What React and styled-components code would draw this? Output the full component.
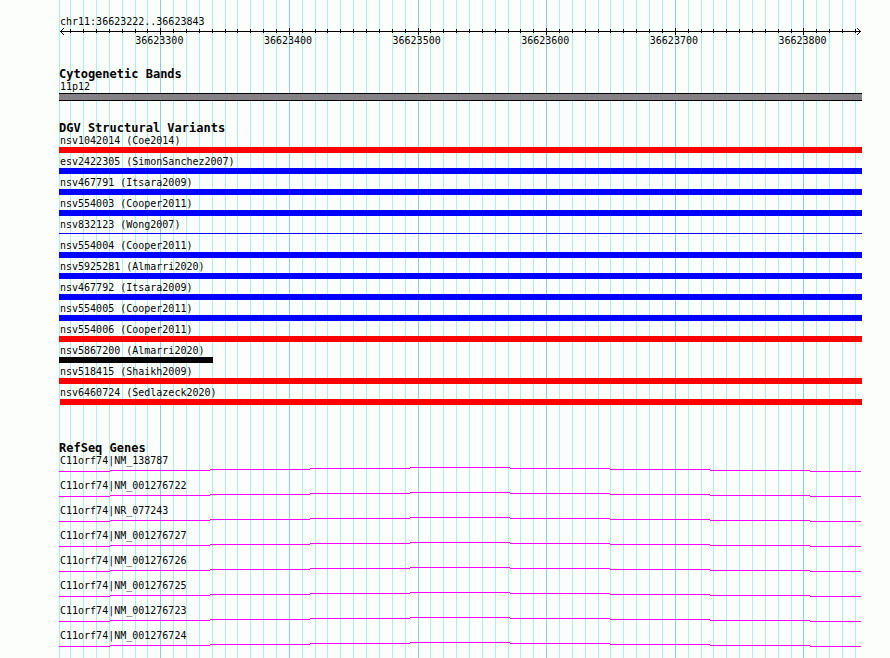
import React from 'react';
import styled, { createGlobalStyle } from 'styled-components';

const GlobalStyle = createGlobalStyle`
  body {
    margin: 0;
    background: #fcfefc;
    color: #000;
    font-family: 'DejaVu Sans Mono', monospace;
    font-size: 10px;
    line-height: 12px;
  }
`;

// visible region of the chromosome, in bases
const START = 36623221.3;
const SPAN = 624.2;
const FIRST_TICK = 36623230;
const LAST_TICK = 36623840;

const percent = base => `${((base - START) / SPAN) * 100}%`;

const ticks = [];
for (let base = FIRST_TICK; base <= LAST_TICK; base += 10) {
  ticks.push({ base, major: base % 100 === 0 });
}

const variants = [
  { name: 'nsv1042014 (Coe2014)', color: '#ff0000' },
  { name: 'esv2422305 (SimonSanchez2007)', color: '#0000ff' },
  { name: 'nsv467791 (Itsara2009)', color: '#0000ff' },
  { name: 'nsv554003 (Cooper2011)', color: '#0000ff' },
  { name: 'nsv832123 (Wong2007)', color: '#0000ff', thin: true },
  { name: 'nsv554004 (Cooper2011)', color: '#0000ff' },
  { name: 'nsv5925281 (Almarri2020)', color: '#0000ff' },
  { name: 'nsv467792 (Itsara2009)', color: '#0000ff' },
  { name: 'nsv554005 (Cooper2011)', color: '#0000ff' },
  { name: 'nsv554006 (Cooper2011)', color: '#ff0000' },
  { name: 'nsv5867200 (Almarri2020)', color: '#000000', end: 36623341 },
  { name: 'nsv518415 (Shaikh2009)', color: '#ff0000' },
  { name: 'nsv6460724 (Sedlazeck2020)', color: '#ff0000', start: 36623222 },
];

const genes = [
  'C11orf74|NM_138787',
  'C11orf74|NM_001276722',
  'C11orf74|NR_077243',
  'C11orf74|NM_001276727',
  'C11orf74|NM_001276726',
  'C11orf74|NM_001276725',
  'C11orf74|NM_001276723',
  'C11orf74|NM_001276724',
];

const Page = styled.main`
  box-sizing: border-box;
  min-height: 100vh;
  padding: 0 28px 0 59px;
  display: flex;
`;

const Browser = styled.div`
  position: relative;
  flex: 1;
  min-width: 0;
  padding: 16px 0 8px;
`;

// grid lines run behind every track
const GridLine = styled.div`
  position: absolute;
  top: 0;
  bottom: 0;
  width: 1px;
  background: ${props => (props.$major ? '#87ceeb' : '#afeeee')};
`;

const Content = styled.div`
  position: relative;
  display: flex;
  flex-direction: column;
`;

const Label = styled.div`
  height: 12px;
  padding-left: 1px;
  white-space: pre;
`;

const Axis = styled.div`
  position: relative;
  height: 19px;
  margin-bottom: 21px;
`;

const AxisLine = styled.div`
  position: absolute;
  top: 3px;
  left: 1px;
  right: 1px;
  height: 1px;
  background: #000;
`;

const ArrowHead = styled.svg`
  position: absolute;
  top: 0;
  ${props => (props.$right ? 'right: 1px;' : 'left: 1px;')}
  width: 4px;
  height: 7px;
`;

const Tick = styled.div`
  position: absolute;
  top: ${props => (props.$major ? '0' : '1px')};
  width: 1px;
  height: ${props => (props.$major ? '7px' : '4px')};
  background: #000;
`;

const TickLabel = styled.div`
  position: absolute;
  top: 7px;
  width: 48px;
  margin-left: -25px;
  white-space: nowrap;
`;

const Track = styled.section`
  margin-bottom: ${props => props.$space || 0}px;
`;

const TrackTitle = styled.h2`
  margin: 0;
  height: 13px;
  font-size: 12px;
  line-height: 13px;
  font-weight: bold;
  white-space: nowrap;
`;

const Rows = styled.div`
  display: flex;
  flex-direction: column;
  gap: ${props => props.$gap}px;
`;

const Band = styled.div`
  box-sizing: border-box;
  height: 8px;
  background: #848284;
  border: solid #000;
  border-width: 1px 0;
`;

const BarSlot = styled.div`
  box-sizing: border-box;
  height: 6px;
  padding-top: ${props => (props.$thin ? 2 : 0)}px;
`;

const Bar = styled.div`
  height: ${props => (props.$thin ? 1 : 6)}px;
  background: ${props => props.$color};
`;

const Intron = styled.svg`
  display: block;
  width: 100%;
  height: 5px;
`;

const Arrow = ({ right }) => (
  <ArrowHead $right={right} viewBox="0 0 4 7" shapeRendering="crispEdges">
    <path
      transform={right ? 'translate(4 0) scale(-1 1)' : undefined}
      d="M0 3h1v1H0zM1 2h1v1H1zM1 4h1v1H1zM2 1h1v1H2zM2 5h1v1H2zM3 0h1v1H3zM3 6h1v1H3z"
    />
  </ArrowHead>
);

// shallow stepped arch that spans the whole region
const IntronLine = () => (
  <Intron viewBox="0 0 803 5" preserveAspectRatio="none" shapeRendering="crispEdges">
    <path
      fill="#ff00ff"
      d="M0 4h51v1H0zM51 3h100v1H51zM151 2h100v1H151zM251 1h100v1H251zM351 0h100v1H351zM451 1h100v1H451zM551 2h100v1H551zM651 3h100v1H651zM751 4h51v1H751z"
    />
  </Intron>
);

const VariantRow = ({ name, color, thin, start, end }) => (
  <div>
    <Label>{name}</Label>
    <BarSlot $thin={thin}>
      <Bar
        $color={color}
        $thin={thin}
        style={{
          marginLeft: start ? percent(start) : 0,
          marginRight: end ? percent(2 * START + SPAN - end) : 0,
        }}
      />
    </BarSlot>
  </div>
);

const App = () => (
  <>
    <GlobalStyle />
    <Page>
      <Browser>
        <GridLine style={{ left: 0 }} />
        {ticks.map(({ base, major }) => (
          <GridLine key={base} $major={major} style={{ left: percent(base) }} />
        ))}
        <Content>
          <Label>chr11:36623222..36623843</Label>
          <Axis>
            <AxisLine />
            <Arrow />
            <Arrow right />
            {ticks.map(({ base, major }) => (
              <Tick key={base} $major={major} style={{ left: percent(base) }} />
            ))}
            {ticks.filter(tick => tick.major).map(({ base }) => (
              <TickLabel key={base} style={{ left: percent(base) }}>{base}</TickLabel>
            ))}
          </Axis>

          <Track $space={21}>
            <TrackTitle>Cytogenetic Bands</TrackTitle>
            <Label>11p12</Label>
            <Band />
          </Track>

          <Track $space={37}>
            <TrackTitle>DGV Structural Variants</TrackTitle>
            <Rows $gap={3}>
              {variants.map(variant => (
                <VariantRow key={variant.name} {...variant} />
              ))}
            </Rows>
          </Track>

          <Track>
            <TrackTitle>RefSeq Genes</TrackTitle>
            <Rows $gap={8}>
              {genes.map(name => (
                <div key={name}>
                  <Label>{name}</Label>
                  <IntronLine />
                </div>
              ))}
            </Rows>
          </Track>
        </Content>
      </Browser>
    </Page>
  </>
);

export default App;
